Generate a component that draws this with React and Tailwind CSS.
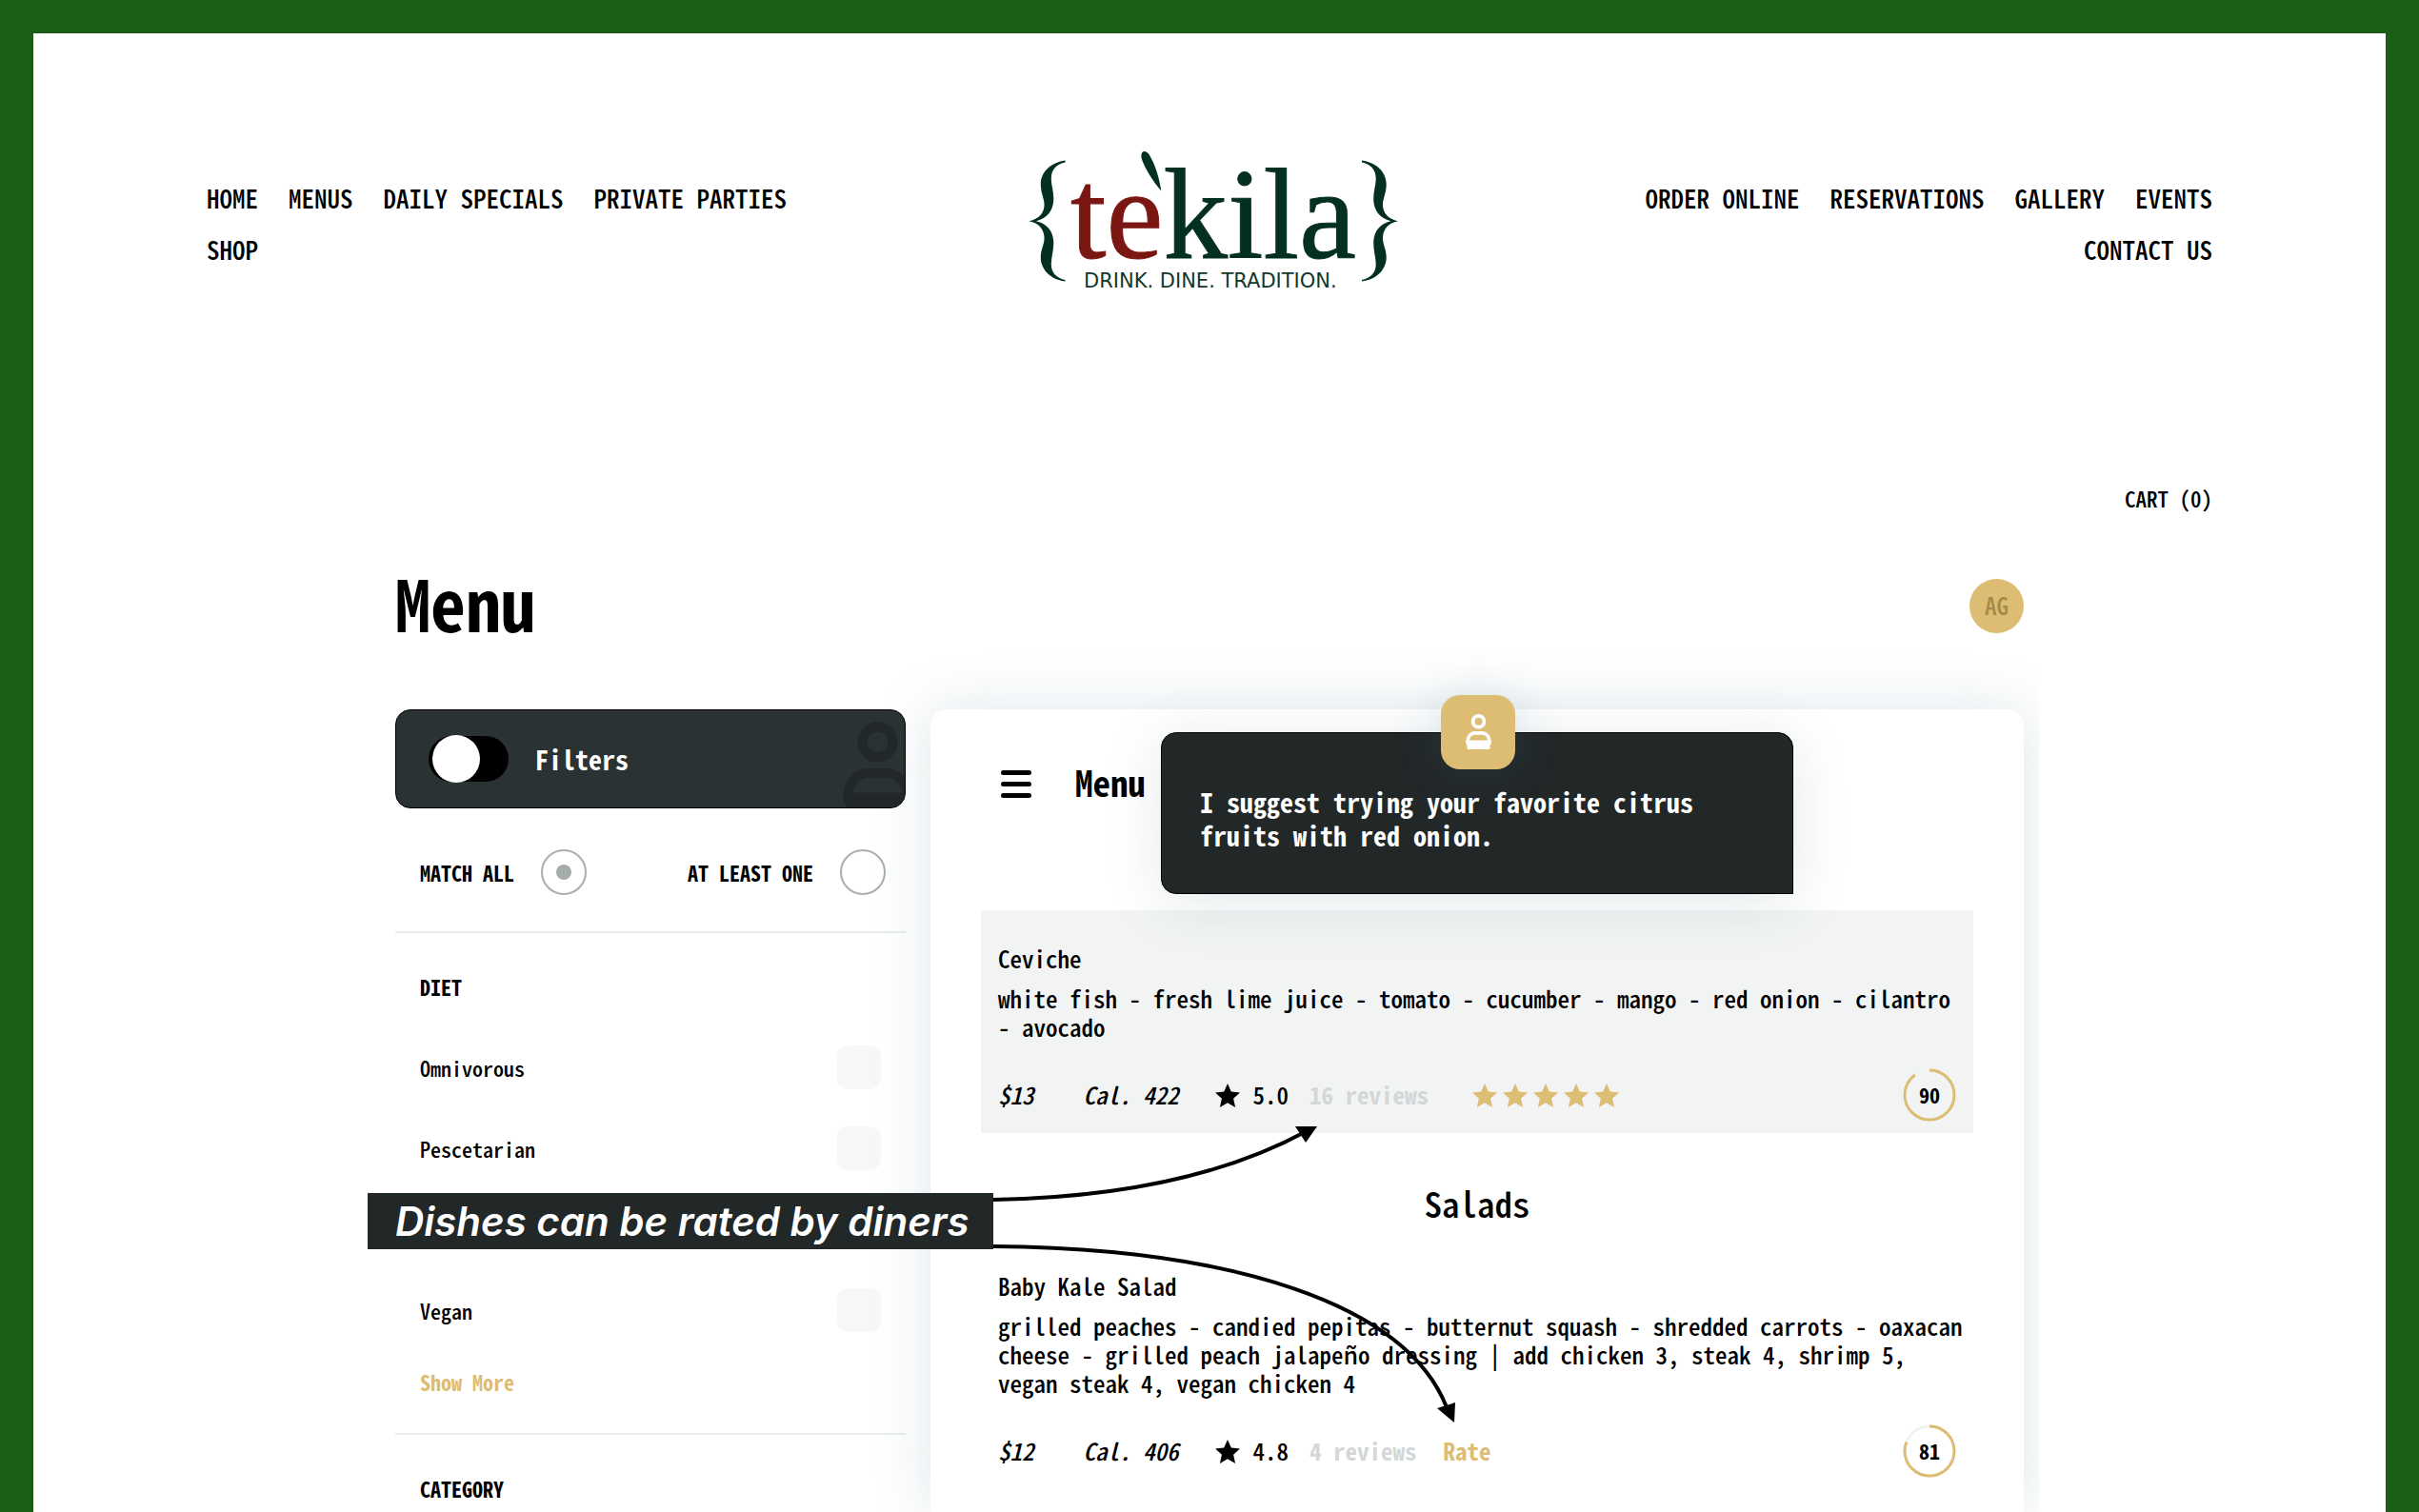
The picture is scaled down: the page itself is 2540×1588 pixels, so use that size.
import React from "react";

const leftLinks = ["HOME", "MENUS", "DAILY SPECIALS", "PRIVATE PARTIES", "SHOP"];
const rightLinks = ["ORDER ONLINE", "RESERVATIONS", "GALLERY", "EVENTS", "CONTACT US"];

const dishes = {
  ceviche: {
    name: "Ceviche",
    text: "white fish - fresh lime juice - tomato - cucumber - mango - red onion - cilantro - avocado",
    price: "$13",
    calories: "Cal. 422",
    rating: "5.0",
    reviews: "16 reviews",
    score: 90,
    rated: true,
  },
  kale: {
    name: "Baby Kale Salad",
    text: "grilled peaches - candied pepitas - butternut squash - shredded carrots - oaxacan cheese - grilled peach jalapeño dressing | add chicken 3, steak 4, shrimp 5, vegan steak 4, vegan chicken 4",
    price: "$12",
    calories: "Cal. 406",
    rating: "4.8",
    reviews: "4 reviews",
    score: 81,
    rated: false,
  },
};

function Logo() {
  return (
    <svg viewBox="-5 0 430 180" className="h-[180px] w-[430px]" role="img" aria-label="Tekila">
      <g fill="#04301f">
        <path
          id="brace"
          d="M58.500 28.600 C42 31 32.500 42 32.800 54 C33 64 37 69 36.500 76 C36 84 31 90 20.500 92.200 C31 94 36 101 36.500 109 C37 116 33 121 32.800 130 C32.500 142 42 153.500 58.500 155.600 L58.500 154 C50 152 43.500 147 43.800 137 C44 129 46.800 122 46.200 113 C45.500 103 40 95 28 92.200 C40 89 45.500 81 46.200 71 C46.800 62 44 56 43.800 48 C43.500 38 50 32 58.500 30.500 Z"
        />
        <use href="#brace" transform="translate(428.500 0) scale(-1 1)" />
        <path d="M138.500 22 C139.500 17.500 144 18 147 23 C153 33 157 46 159.300 60.500 C151 51 142 37 138.500 26 Z" />
      </g>
      <text x="64" y="131" fontFamily="'Liberation Serif', serif" fontSize="135" strokeWidth="1">
        <tspan fill="#7b1712" stroke="#7b1712">te</tspan>
        <tspan fill="#04301f" stroke="#04301f">kila</tspan>
      </text>
      <text x="78" y="162" fontFamily="'DejaVu Sans', sans-serif" fontSize="21" fill="#12372a">
        DRINK. DINE. TRADITION.
      </text>
    </svg>
  );
}

function ChefIcon({ className }) {
  return (
    <svg viewBox="0 0 27 38" className={className} aria-hidden="true" fill="none" stroke="currentColor">
      <circle cx="13.500" cy="7.800" r="5.900" strokeWidth="3.800" />
      <path d="M2 29.500 C2 23.500 5.500 19.900 10 19.900 H17 C21.500 19.900 25 23.500 25 29.500" strokeWidth="3.600" />
      <path d="M0.300 27.500 H26.700 V30 C26.700 32 25.500 32.500 25.500 33 V36 Q25.500 37 24.500 37 H2.500 Q1.500 37 1.500 36 V33 C1.500 32.500 0.300 32 0.300 30 Z" fill="currentColor" stroke="none" />
    </svg>
  );
}

function Star({ className }) {
  return (
    <svg viewBox="0 0 26 25" className={className} aria-hidden="true">
      <path fill="currentColor" d="M13 0 L16.800 8.600 L26 9.500 L19.100 15.700 L21.100 25 L13 20.200 L4.900 25 L6.900 15.700 L0 9.500 L9.200 8.600 Z" />
    </svg>
  );
}

function Score({ value }) {
  return (
    <div className="relative grid size-14 place-items-center">
      <svg viewBox="0 0 56 56" className="absolute inset-0 size-14 -rotate-90" aria-hidden="true" fill="none" strokeWidth="3">
        <circle cx="28" cy="28" r="26" stroke="#f0f4f5" />
        <circle cx="28" cy="28" r="26" stroke="#dcbd73" pathLength="100" strokeDasharray={`${value} 100`} />
      </svg>
      <span className="pb-0.5 text-[22px] leading-7 font-bold">{value}</span>
    </div>
  );
}

function Dish({ dish, highlighted }) {
  return (
    <article className={highlighted ? "bg-[#f2f4f4] pt-[35px] pr-2 pb-3 pl-[18px]" : "pt-[35px] pr-2 pb-3 pl-[18px]"}>
      <h3 className="leading-[30px]">{dish.name}</h3>
      <p className="mt-3 leading-[30px]">{dish.text}</p>
      <div className="mt-[29px] flex items-center pr-2.5">
        <i>{dish.price}</i>
        <i className="ml-[52px]">{dish.calories}</i>
        <Star className="ml-[38px] h-[25px] w-[26px]" />
        <span className="ml-3.5">{dish.rating}</span>
        <a href="#reviews" className="ml-[22px] font-bold text-[#d3d7d7]">{dish.reviews}</a>
        {dish.rated ? (
          <div className="ml-[46px] flex gap-1.5 text-[#dcbd73]" role="img" aria-label="5 stars">
            {[1, 2, 3, 4, 5].map((n) => (
              <Star key={n} className="h-[25px] w-[26px]" />
            ))}
          </div>
        ) : (
          <button type="button" className="ml-7 font-bold text-[#dcbd73]">Rate</button>
        )}
        <div className="ml-auto">
          <Score value={dish.score} />
        </div>
      </div>
    </article>
  );
}

function MatchOption({ label, checked }) {
  return (
    <label className="flex items-center gap-7 text-[22px] leading-[30px] font-bold">
      {label}
      <input
        type="radio"
        name="match"
        defaultChecked={checked}
        className="grid size-12 appearance-none place-items-center rounded-full border-2 border-[#a9aeae] before:size-4 before:rounded-full checked:before:bg-[#a5abab]"
      />
    </label>
  );
}

function DietOption({ label }) {
  return (
    <label className="flex items-center justify-between text-[22px] leading-[30px]">
      {label}
      <input type="checkbox" className="size-[46px] appearance-none rounded-xl bg-[#f7f7f7] checked:bg-[#dcbd73]" />
    </label>
  );
}

function Filters() {
  return (
    <aside className="w-[536px] shrink-0">
      <div className="relative flex h-[104px] items-center gap-7 overflow-hidden rounded-2xl border border-black bg-[#2b3234] pl-[34px] text-white">
        <input
          id="filters"
          type="checkbox"
          role="switch"
          className="flex h-12 w-[84px] appearance-none items-center rounded-full bg-black pl-1 before:size-[50px] before:shrink-0 before:rounded-full before:bg-white"
        />
        <label htmlFor="filters" className="text-[28px] leading-9 font-bold">Filters</label>
        <ChefIcon className="absolute top-3 -right-2 h-[103px] w-[73px] text-[#222829]" />
      </div>
      <div className="flex justify-between border-b-2 border-[#e9ecee] pt-[43px] pr-[21px] pb-[38px] pl-[26px]">
        <MatchOption label="MATCH ALL" checked />
        <MatchOption label="AT LEAST ONE" />
      </div>
      <div className="border-b-2 border-[#e9ecee] pt-[41px] pr-[26px] pb-[39px] pl-[26px]">
        <h2 className="text-[22px] leading-[30px] font-bold">DIET</h2>
        <div className="mt-[47px] flex flex-col gap-[39px]">
          <DietOption label="Omnivorous" />
          <DietOption label="Pescetarian" />
        </div>
        <div className="mt-[124px]">
          <DietOption label="Vegan" />
        </div>
        <button type="button" className="mt-[37px] block text-[22px] leading-[30px] font-bold text-[#dcbd73]">Show More</button>
      </div>
      <h2 className="px-[26px] pt-[41px] text-[22px] leading-[30px] font-bold">CATEGORY</h2>
    </aside>
  );
}

function Suggestion() {
  return (
    <div className="absolute top-6 left-[242px] w-[664px] rounded-2xl rounded-br-none border border-black bg-[#222728] pt-[55px] pr-16 pb-[43px] pl-10 text-[28px] leading-[35px] font-bold text-white shadow-[0_8px_60px_rgba(60,90,110,0.14)]">
      <div className="absolute -top-10 left-[293px] grid size-[78px] place-items-center rounded-[20px] bg-[#dcbd73] shadow-[0_0_50px_rgba(90,130,150,0.18)]">
        <ChefIcon className="h-[38px] w-[27px]" />
      </div>
      <p>I suggest trying your favorite citrus fruits with red onion.</p>
    </div>
  );
}

function Callout() {
  return (
    <div className="absolute top-[508px] left-[-29px] z-20">
      <p className="w-[657px] bg-[#222728] pl-[29px] font-[Inter,sans-serif] text-[42px] leading-[59px] font-semibold whitespace-nowrap text-white italic">
        Dishes can be rated by diners
      </p>
      <svg viewBox="0 0 500 330" className="pointer-events-none absolute -top-[80px] left-[657px] h-[330px] w-[500px]" aria-hidden="true" fill="none" stroke="#000" strokeWidth="4">
        <path d="M0 87 C120 85 235 66 329 15" />
        <path d="M317 10 H340 L328 27 Z" fill="#000" stroke="none" />
        <path d="M0 136 C250 138 433 196 476 305" />
        <path d="M466 306 L485 300 L484 321 Z" fill="#000" stroke="none" />
      </svg>
    </div>
  );
}

export default function App() {
  return (
    <div className="flex min-h-screen flex-col border-x-[35px] border-t-[35px] border-[#1b5e15] bg-white font-['Noto_Sans_CJK_SC',monospace] text-[25px] font-medium text-black [font-feature-settings:'hwid',_'liga'_0]">
      <header className="px-[182px] pt-[105px]">
        <div className="flex justify-between">
          <nav aria-label="Primary" className="mt-[53px] flex w-[660px] flex-wrap content-start gap-x-8 gap-y-6 text-[27px] leading-[30px]">
            {leftLinks.map((link) => (
              <a key={link} href="#top">{link}</a>
            ))}
          </nav>
          <a href="#top"><Logo /></a>
          <nav aria-label="Secondary" className="mt-[53px] flex w-[660px] flex-wrap content-start justify-end gap-x-8 gap-y-6 text-[27px] leading-[30px]">
            {rightLinks.map((link) => (
              <a key={link} href="#top">{link}</a>
            ))}
          </nav>
        </div>
        <div className="mt-[188px] flex justify-end">
          <a href="#cart" className="text-[23px] leading-[30px]">CART (0)</a>
        </div>
      </header>
      <main className="mx-auto flex w-full max-w-[1710px] grow flex-col">
        <div className="mt-[54px] flex items-center justify-between">
          <h1 className="pb-2 text-[74px] leading-[80px] font-bold">Menu</h1>
          <button type="button" className="size-[57px] rounded-full bg-[#dcbd73] text-[25px] text-[#a48a45]">AG</button>
        </div>
        <div className="relative mt-[65px] flex grow">
          <Filters />
          <div className="-mr-4 -ml-16 flex grow overflow-x-clip pr-4 pl-[90px]">
            <section className="grow rounded-t-2xl bg-white px-[53px] shadow-[0_0_60px_rgba(70,120,140,0.18)]">
              <div className="relative -mx-[53px] flex h-[211px] items-start gap-[46px] pt-[53px] pl-[74px]">
                <button type="button" aria-label="Open menu" className="mt-[11px] flex w-8 flex-col gap-[7px]">
                  <span className="h-[5px] rounded-full bg-black" />
                  <span className="h-[5px] rounded-full bg-black" />
                  <span className="h-[5px] rounded-full bg-black" />
                </button>
                <h2 className="text-[37px] leading-[46px] font-bold">Menu</h2>
                <Suggestion />
              </div>
              <Dish dish={dishes.ceviche} highlighted />
              <h2 className="pt-12 pb-3 text-center text-[37px] leading-[50px]">Salads</h2>
              <Dish dish={dishes.kale} />
            </section>
          </div>
          <Callout />
        </div>
      </main>
    </div>
  );
}
